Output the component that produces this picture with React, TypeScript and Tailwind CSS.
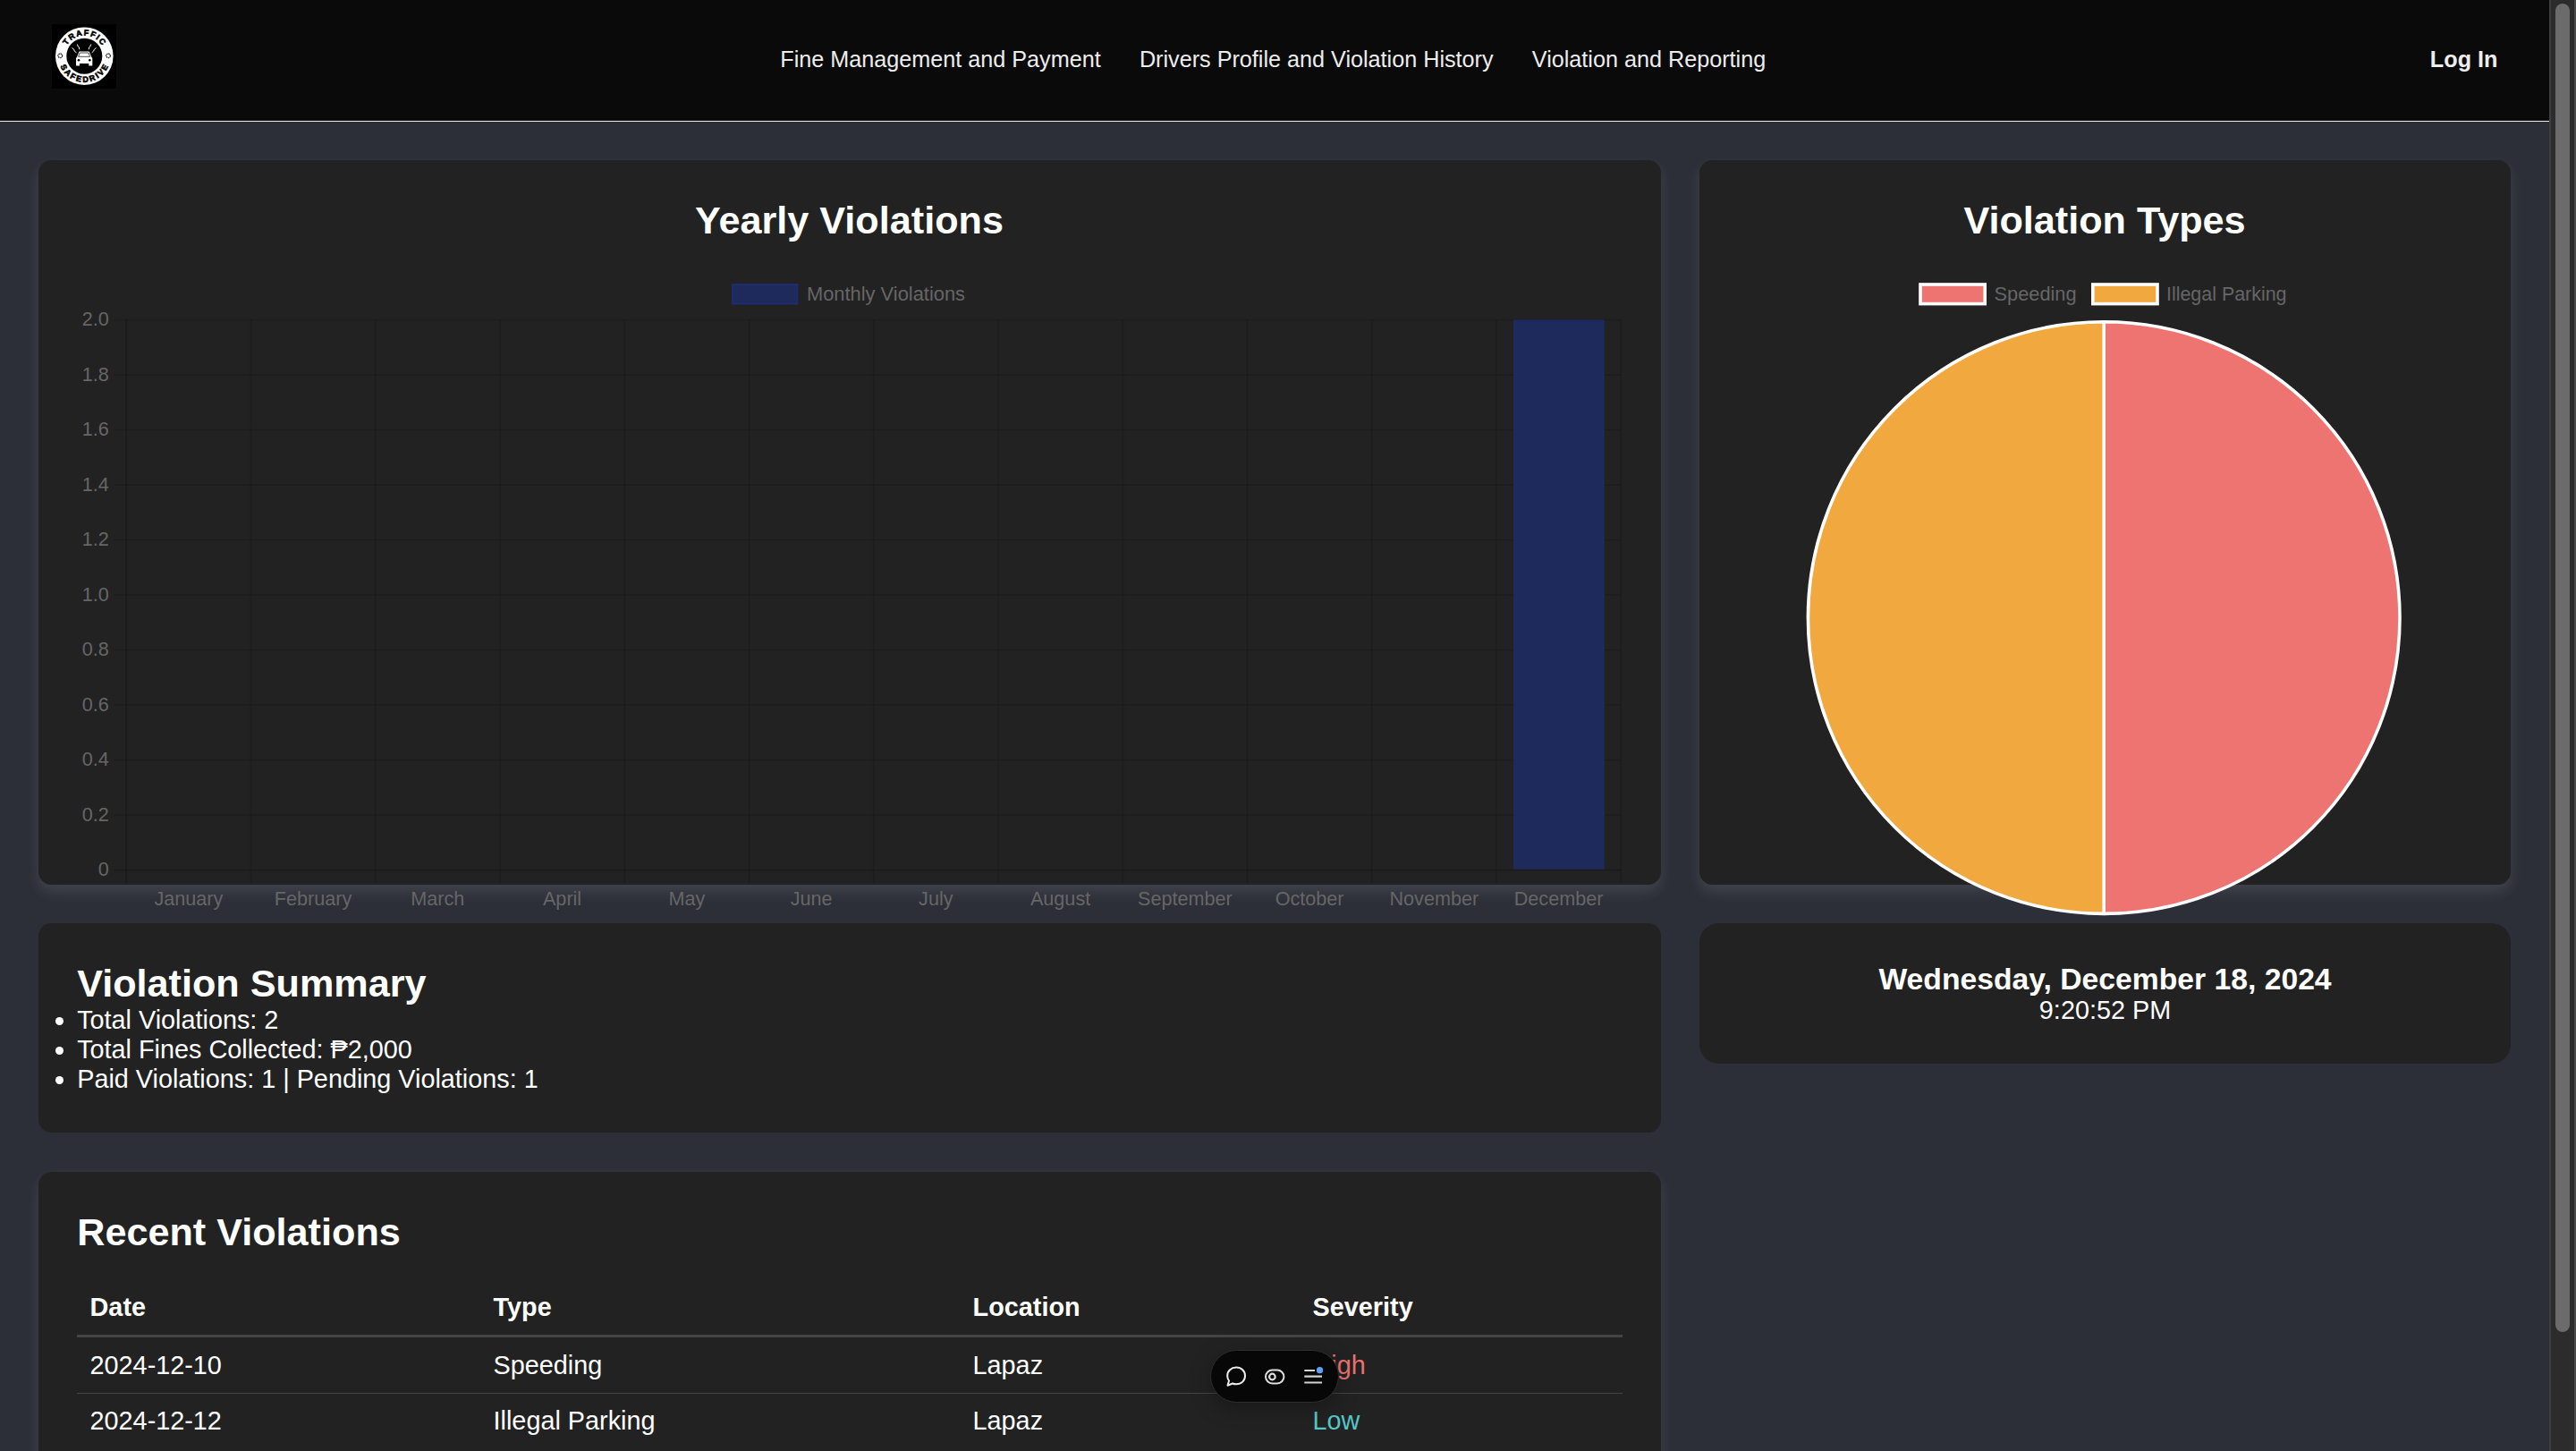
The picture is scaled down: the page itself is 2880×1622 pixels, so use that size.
import React from "react";

const MONTHS = ["January", "February", "March", "April", "May", "June", "July", "August", "September", "October", "November", "December"];
const TICKS = ["2.0", "1.8", "1.6", "1.4", "1.2", "1.0", "0.8", "0.6", "0.4", "0.2", "0"];
const NAV = ["Fine Management and Payment", "Drivers Profile and Violation History", "Violation and Reporting"];
const ROWS = [
  { date: "2024-12-10", type: "Speeding", location: "Lapaz", severity: "High", color: "text-[#ec7272]" },
  { date: "2024-12-12", type: "Illegal Parking", location: "Lapaz", severity: "Low", color: "text-[#56c6c6]" },
];

const FONT = "'Liberation Sans', Arial, sans-serif";

function Logo() {
  return (
    <svg width="72" height="72" viewBox="0 0 72 72" className="block shrink-0" fontFamily={FONT}>
      <rect width="72" height="72" fill="#000" />
      <circle cx="36.3" cy="35.7" r="32.3" fill="#fff" />
      <circle cx="36.3" cy="35.7" r="20" fill="#000" />
      <defs>
        <path id="logo-top" d="M13.3 35.7a23 23 0 0 1 46 0" />
        <path id="logo-bottom" d="M7.2 35.7a29.1 29.1 0 0 0 58.2 0" />
      </defs>
      <text fontSize="9" fontWeight="700" textLength="47" textAnchor="middle" fill="#000" stroke="#000" strokeWidth="0.6">
        <textPath href="#logo-top" startOffset="50%" textLength="47">TRAFFIC</textPath>
      </text>
      <text fontSize="9" fontWeight="700" textLength="68" textAnchor="middle" fill="#000" stroke="#000" strokeWidth="0.6">
        <textPath href="#logo-bottom" startOffset="50%" textLength="68">SAFEDRIVE</textPath>
      </text>
      <g fill="none" stroke="#222" strokeWidth="1.3">
        <circle cx="9.3" cy="35.3" r="2.3" strokeDasharray="1.4 0.6" />
        <circle cx="63" cy="35.3" r="2.3" strokeDasharray="1.4 0.6" />
      </g>
      <g stroke="#fff" strokeWidth="1" fill="none">
        <path d="M22.500 26.500l2.400 2 .3 1.600 2.300 1.800M28.300 22.500l1 2.600 1 .6.6 2.600M43.700 22.500l-1 2.600-.9.6-.6 2.600M49.500 26.500l-2.300 2-.5 1.600-2.100 1.800" />
      </g>
      <path d="M30.500 30.500h11.200l2.600 6.300 1 1.300v8.400h-4v-2.400H31v2.400h-4v-8.400l1-1.300z" fill="#fff" />
      <path d="M31.300 32h9.600l1.700 4.300h-13z" fill="#fff" stroke="#000" strokeWidth=".7" />
      <circle cx="30" cy="40.2" r="1.3" />
      <circle cx="42.3" cy="40.2" r="1.3" />
    </svg>
  );
}

function BarChart() {
  const left = 55.2;
  const right = 1726.2;
  const top = 50.7;
  const bottom = 665.7;
  const colW = (right - left) / 12;
  const rowH = (bottom - top) / 10;
  return (
    <svg width="1728" height="716" viewBox="0 0 1728 716" className="block shrink-0 overflow-visible" fontFamily={FONT} fontSize="21.6" fill="#666">
      <rect x="733" y="11" width="72.4" height="21.6" fill="#1f2a5c" stroke="#1e2d73" strokeWidth="1.8" />
      <text x="816" y="28.8" textLength="177" lengthAdjust="spacingAndGlyphs">Monthly Violations</text>
      {TICKS.map((t, i) => (
        <g key={t}>
          <path d={`M${left - 14} ${top + rowH * i}H${right}`} stroke="#000" strokeOpacity={i === 10 ? 0.2 : 0.12} strokeWidth="1.8" />
          <text x="35.800" y={top + rowH * i + 6.600} textAnchor="end">{t}</text>
        </g>
      ))}
      {Array.from({ length: 13 }, (_, i) => (
        <path key={i} d={`M${left + colW * i} ${top}V${bottom + 14.4}`} stroke="#000" strokeOpacity={i === 0 ? 0.2 : 0.12} strokeWidth="1.8" />
      ))}
      <rect x="1606.400" y={top - 0.4} width="101" height={bottom - top - 0.6} fill="#1f2a5c" />
      <path d={`M1607 ${top}V${bottom - 1}M1706.800 ${top}V${bottom - 1}`} stroke="#1e2c68" strokeWidth="1.200" />
      {MONTHS.map((m, i) => (
        <text key={m} x={left + colW * (i + 0.5)} y="704.700" textAnchor="middle">{m}</text>
      ))}
    </svg>
  );
}

function PieChart() {
  return (
    <svg width="820" height="716" viewBox="0 0 820 716" className="block shrink-0 overflow-visible" fontFamily={FONT} fontSize="21.6" fill="#666">
      <g stroke="#fff" strokeWidth="3.6">
        <rect x="203" y="11" width="72.2" height="21.6" fill="#ee7472" />
        <rect x="395.800" y="11" width="72.2" height="21.6" fill="#f0a83f" />
      </g>
      <text x="285.600" y="28.8" textLength="92" lengthAdjust="spacingAndGlyphs">Speeding</text>
      <text x="478" y="28.8" textLength="134.5" lengthAdjust="spacingAndGlyphs">Illegal Parking</text>
      <g stroke="#fff" strokeWidth="3.6" strokeLinejoin="round">
        <path d="M408.200 52.800a330.800 330.800 0 0 1 0 661.600z" fill="#ee7472" />
        <path d="M408.200 52.800a330.800 330.800 0 0 0 0 661.600z" fill="#f0a83f" />
      </g>
    </svg>
  );
}

function Toolbar() {
  return (
    <div className="fixed left-[1353px] top-[1509px] flex h-[59px] w-[144px] items-center justify-between rounded-full border border-[#2e2e2e] bg-[#070707] px-[16px] shadow-[0_6px_24px_rgba(0,0,0,0.3)]">
      <svg width="24" height="24" viewBox="0 0 24 24" fill="none" stroke="#ededed" strokeWidth="2" strokeLinejoin="round">
        <path d="M12.200 1.500c5.700 0 9.800 4 9.800 9.400s-4.100 9.400-9.800 9.400c-1.500 0-2.900-.2-4.100-.8L2.500 21.700l1.500-5.300C2.800 14.900 2.200 13 2.200 10.900 2.200 5.500 6.500 1.500 12.200 1.500z" />
      </svg>
      <svg width="24" height="24" viewBox="0 0 24 24" fill="none" stroke="#dedede" strokeWidth="2">
        <rect x="2" y="4.500" width="20.400" height="15" rx="7.500" />
        <circle cx="9.400" cy="12" r="3.300" strokeWidth="2.200" />
      </svg>
      <svg width="24" height="24" viewBox="0 0 24 24" fill="none" stroke="#d4d4d4" strokeWidth="2.200">
        <path d="M2.300 5H14M2.300 11.700h19.700M2.300 18.500h19.700" />
        <circle cx="19.500" cy="4.700" r="3.600" fill="#5ea2f8" stroke="none" />
      </svg>
    </div>
  );
}

const CARD = "rounded-[14.4px] bg-[#222222]";
const GLOW = "shadow-[0_7.2px_14.4px_rgba(255,255,255,0.1)]";

export default function App() {
  return (
    <div className="flex h-[1622px] w-[2880px] overflow-hidden bg-[#2c2f38] font-['Liberation_Sans',Arial,sans-serif] text-[28.8px] leading-[33px] text-white">
      <div className="flex h-full w-[2850px] flex-col">
        <header className="flex h-[136px] shrink-0 items-center justify-between border-b border-[#ededed] bg-[#0a0a0a] px-[57.6px] pb-[9px] text-[25.2px] text-[#ededed]">
          <Logo />
          <nav className="flex gap-[43.2px] pt-[6px]">
            {NAV.map((n) => (
              <a key={n} className="leading-[29px]">{n}</a>
            ))}
          </nav>
          <a className="pt-[6px] font-bold leading-[29px]">Log In</a>
        </header>

        <main className="grid grid-cols-[1814px_907px] items-start gap-x-[43px] pl-[43px] pt-[43px]">
          <section className={`${CARD} ${GLOW} relative z-10 flex h-[810px] flex-col items-center pt-[43px]`}>
            <h2 className="pr-px text-[43.2px] font-bold leading-[48px]">Yearly Violations</h2>
            <div className="mt-[37px] w-[1728px]">
              <BarChart />
            </div>
          </section>
          <section className={`${CARD} ${GLOW} relative z-10 flex h-[810px] flex-col items-center pt-[43px]`}>
            <h2 className="pr-px text-[43.2px] font-bold leading-[48px]">Violation Types</h2>
            <div className="mt-[37px] w-[820px]">
              <PieChart />
            </div>
          </section>

          <div className="mt-[43px] flex flex-col gap-[44px]">
            <section className={`${CARD} h-[234px] px-[43.2px] pt-[43px]`}>
              <h2 className="text-[43.2px] font-bold leading-[48px]">Violation Summary</h2>
              <ul className="list-outside list-disc pt-px">
                <li>Total Violations: 2</li>
                <li>Total Fines Collected: ₱2,000</li>
                <li>Paid Violations: 1 | Pending Violations: 1</li>
              </ul>
            </section>
            <section className={`${CARD} ${GLOW} h-[420px] px-[43.2px] pt-[43px]`}>
              <h2 className="text-[43.2px] font-bold leading-[48px]">Recent Violations</h2>
              <div className="mt-[30px] grid h-[64px] grid-cols-[451px_536px_380px_1fr] border-b-[3px] border-[#444444] pl-[14.4px] pt-[14.4px] font-bold">
                <span>Date</span>
                <span>Type</span>
                <span>Location</span>
                <span>Severity</span>
              </div>
              {ROWS.map((r) => (
                <div key={r.date} className="grid h-[63px] grid-cols-[451px_536px_380px_1fr] border-b border-[#444444] pl-[14.4px] pt-[15.2px] last:border-b-0 last:pt-[14.4px]">
                  <span>{r.date}</span>
                  <span>{r.type}</span>
                  <span>{r.location}</span>
                  <span className={r.color}>{r.severity}</span>
                </div>
              ))}
            </section>
          </div>

          <section className="mt-[43px] h-[157px] rounded-[21.6px] bg-[#222222] pt-[43px] text-center">
            <h3 className="text-[33.7px] font-bold leading-[38px]">Wednesday, December 18, 2024</h3>
            <p>9:20:52 PM</p>
          </section>
        </main>
      </div>

      <div className="flex h-full w-[30px] justify-center border-l-2 border-r-2 border-l-[#3e3e3e] border-r-[#4a4a4a] bg-[#2c2c2c] pt-[4px]">
        <div className="h-[1485px] w-[16px] rounded-full bg-[#6b6b6b]" />
      </div>

      <Toolbar />
    </div>
  );
}
